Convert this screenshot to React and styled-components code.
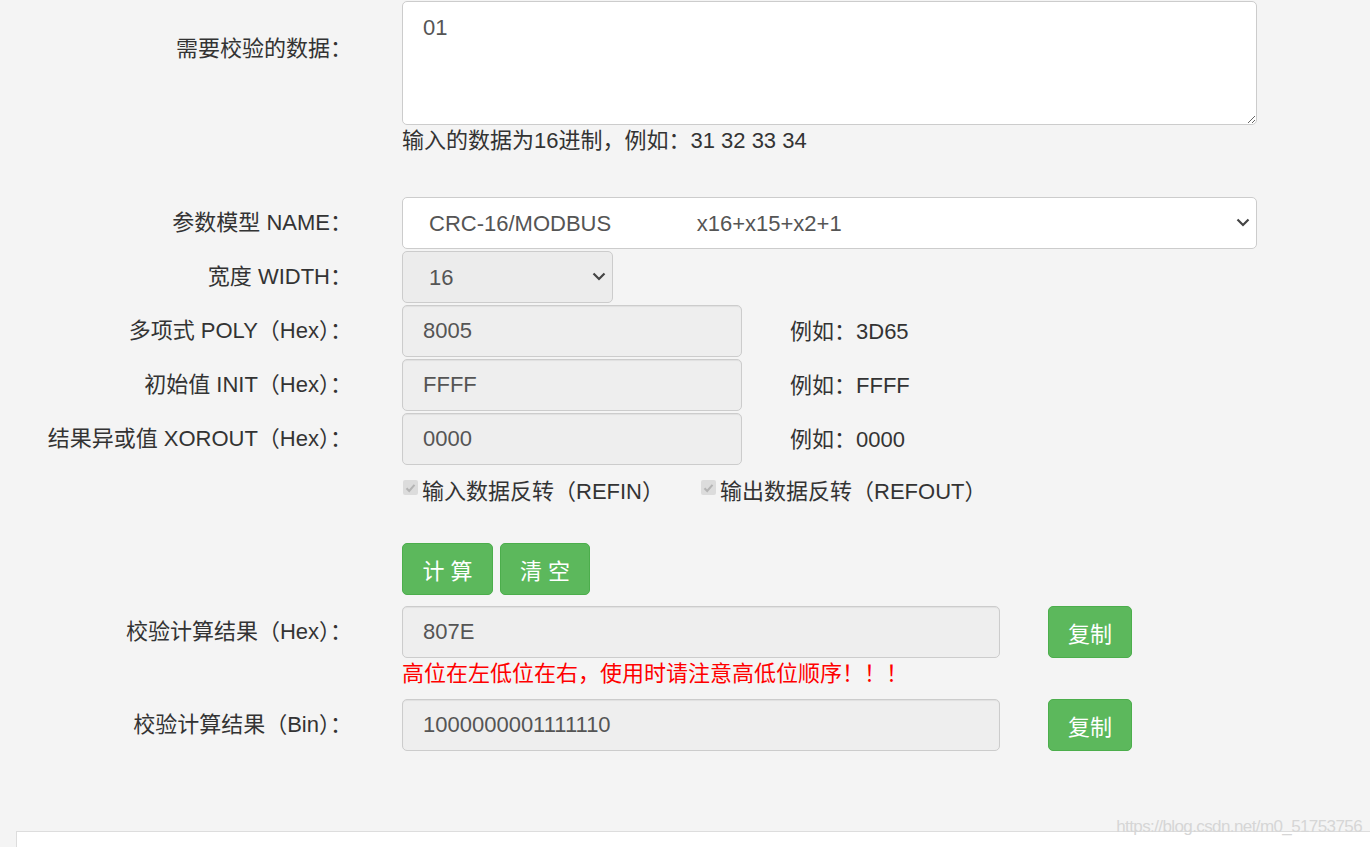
import React from 'react'
import styled, { createGlobalStyle } from 'styled-components'

const GlobalStyle = createGlobalStyle`
  html, body {
    margin: 0;
    padding: 0;
    background: #f4f4f4;
  }
  body {
    font-family: "Liberation Sans", Arial, "Noto Sans CJK SC", sans-serif;
    font-size: 22px;
    color: #333;
  }
`

const Page = styled.div`
  position: relative;
  height: 847px;
  overflow: hidden;
  padding-top: 1px;
  box-sizing: border-box;
`

const Form = styled.div`
  display: flex;
  flex-direction: column;
`

const Row = styled.div`
  display: flex;
  align-items: ${p => (p.top ? 'flex-start' : 'center')};
  margin-top: ${p => p.mt || 0}px;
  margin-bottom: ${p => (p.mb === undefined ? 2 : p.mb)}px;
`

const Label = styled.div`
  width: 352px;
  flex-shrink: 0;
  text-align: right;
  line-height: 28px;
  padding-top: ${p => p.pt || 0}px;
`

const Field = styled.div`
  margin-left: 50px;
  display: flex;
  flex-direction: column;
`

const Inline = styled.div`
  margin-left: ${p => (p.flush ? 0 : 50)}px;
  display: flex;
  align-items: center;
`

const TextArea = styled.textarea`
  width: 855px;
  height: 124px;
  box-sizing: border-box;
  border: 1px solid #ccc;
  border-radius: 5px;
  background: #fff;
  padding: 12px 20px;
  font: inherit;
  color: #555;
  line-height: 28px;
  resize: vertical;
  outline: none;
`

const Hint = styled.div`
  line-height: 30px;
  margin-top: 1px;
  color: ${p => p.color || '#333'};
`

const SelectWrap = styled.div`
  position: relative;
  width: ${p => p.w}px;
`

const Select = styled.select`
  appearance: none;
  width: 100%;
  height: 52px;
  box-sizing: border-box;
  border: 1px solid #ccc;
  border-radius: 5px;
  background: ${p => (p.muted ? '#ececec' : '#fff')};
  padding: 0 40px 0 26px;
  font: inherit;
  color: #555;
  outline: none;
`

const Chevron = styled.svg`
  position: absolute;
  right: 7px;
  top: 21px;
  pointer-events: none;
`

const Input = styled.input`
  width: ${p => p.w}px;
  height: 52px;
  box-sizing: border-box;
  border: 1px solid #ccc;
  border-radius: 5px;
  background: #eee;
  padding: 0 20px;
  font: inherit;
  color: #555;
  box-shadow: inset 0 1px 1px rgba(0, 0, 0, 0.06);
  outline: none;
`

const Example = styled.span`
  margin-left: 48px;
  margin-top: -4px;
`

const Checks = styled.div`
  margin-left: 50px;
  display: flex;
  align-items: center;
  height: 50px;
`

const Check = styled.label`
  display: flex;
  align-items: center;
  margin-right: 36px;
  line-height: 28px;
`

const Box = styled.span`
  flex-shrink: 0;
  width: 15px;
  height: 15px;
  margin: -9px 4px 0 1px;
  border-radius: 2px;
  background: #dcdcdc;
  display: flex;
  align-items: center;
  justify-content: center;
`

const Buttons = styled.div`
  margin-left: 50px;
  display: flex;
  gap: 7px;
`

const Button = styled.button`
  width: ${p => p.w}px;
  height: 52px;
  border: 1px solid #4cae4c;
  border-radius: 5px;
  background: #5cb85c;
  color: #fff;
  font: inherit;
  letter-spacing: ${p => p.ls || 0}px;
  text-indent: ${p => p.ls || 0}px;
  padding: 0;
  cursor: pointer;
`

const CopyButton = styled(Button)`
  margin-left: 48px;
`

const Footer = styled.div`
  position: absolute;
  left: 16px;
  right: 0;
  top: 831px;
  height: 40px;
  background: #fff;
  border-top: 1px solid #ddd;
  border-left: 1px solid #ddd;
`

const Watermark = styled.div`
  position: absolute;
  right: 8px;
  top: 817px;
  font-family: "Liberation Sans Narrow", "Liberation Sans", sans-serif;
  font-size: 17px;
  color: #d6d6d6;
  letter-spacing: -0.6px;
`

const CheckMark = () => (
  <svg width="11" height="10" viewBox="0 0 11 10">
    <path d="M1.5 5.2 L4.2 8 L9.5 1.8" fill="none" stroke="#b4b4b4" strokeWidth="2" />
  </svg>
)

const Down = () => (
  <Chevron width="14" height="9" viewBox="0 0 14 9">
    <path d="M1.5 1.5 L7 7 L12.5 1.5" fill="none" stroke="#444" strokeWidth="2.2" />
  </Chevron>
)

const gap = '\u00a0'.repeat(14)

const params = [
  { label: '多项式 POLY（Hex）：', value: '8005', ex: '3D65' },
  { label: '初始值 INIT（Hex）：', value: 'FFFF', ex: 'FFFF' },
  { label: '结果异或值 XOROUT（Hex）：', value: '0000', ex: '0000' },
]

const App = () => (
  <Page>
    <GlobalStyle />
    <Form>
      <Row top mb={41}>
        <Label pt={34}>需要校验的数据：</Label>
        <Field>
          <TextArea defaultValue="01" />
          <Hint>输入的数据为16进制，例如：31 32 33 34</Hint>
        </Field>
      </Row>

      <Row>
        <Label>参数模型 NAME：</Label>
        <Inline>
          <SelectWrap w={855}>
            <Select defaultValue="modbus">
              <option value="modbus">{`CRC-16/MODBUS${gap}x16+x15+x2+1`}</option>
            </Select>
            <Down />
          </SelectWrap>
        </Inline>
      </Row>

      <Row>
        <Label>宽度 WIDTH：</Label>
        <Inline>
          <SelectWrap w={211}>
            <Select muted defaultValue="16">
              <option value="16">16</option>
            </Select>
            <Down />
          </SelectWrap>
        </Inline>
      </Row>

      {params.map(p => (
        <Row key={p.label}>
          <Label>{p.label}</Label>
          <Inline>
            <Input w={340} readOnly value={p.value} />
            <Example>例如：{p.ex}</Example>
          </Inline>
        </Row>
      ))}

      <Row mb={0}>
        <Label />
        <Checks>
          <Check>
            <Box><CheckMark /></Box>
            输入数据反转（REFIN）
          </Check>
          <Check>
            <Box><CheckMark /></Box>
            输出数据反转（REFOUT）
          </Check>
        </Checks>
      </Row>

      <Row mt={26} mb={11}>
        <Label />
        <Buttons>
          <Button w={91} ls={6}>计算</Button>
          <Button w={90} ls={6}>清空</Button>
        </Buttons>
      </Row>

      <Row top mb={10}>
        <Label pt={12}>校验计算结果（Hex）：</Label>
        <Field>
          <Inline flush>
            <Input w={598} readOnly value="807E" />
            <CopyButton w={84}>复制</CopyButton>
          </Inline>
          <Hint color="#f00">高位在左低位在右，使用时请注意高低位顺序！！！</Hint>
        </Field>
      </Row>

      <Row>
        <Label>校验计算结果（Bin）：</Label>
        <Inline>
          <Input w={598} readOnly value="1000000001111110" />
          <CopyButton w={84}>复制</CopyButton>
        </Inline>
      </Row>
    </Form>
    <Footer />
    <Watermark>https://blog.csdn.net/m0_51753756</Watermark>
  </Page>
)

export default App
